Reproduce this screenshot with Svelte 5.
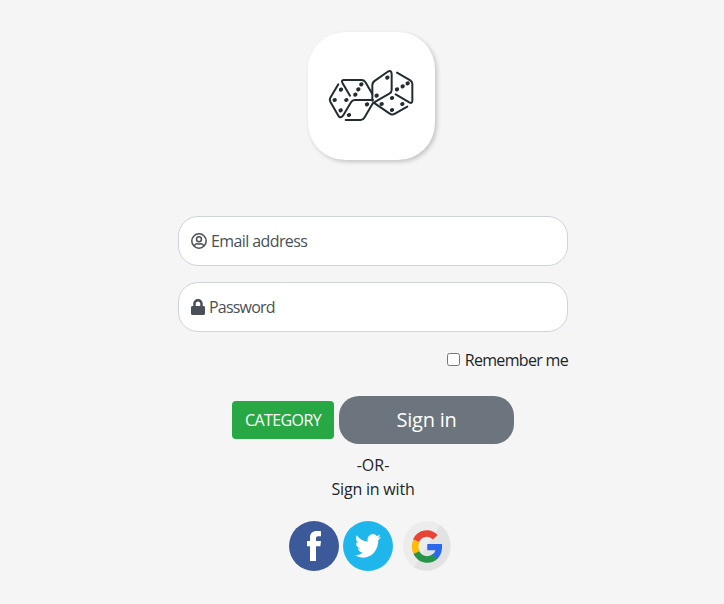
<script>
  let email = $state('');
  let password = $state('');
  let remember = $state(false);
  const pips = [
    [123, 197], [104, 228], [139, 228], [122, 259],
    [184, 181], [175, 196], [166, 212], [201, 241], [147, 273],
    [262, 161], [230, 215], [323, 178], [308, 187], [291, 196],
    [276, 222], [245, 240], [307, 240], [276, 258]
  ];
</script>

<main>
  <div class="logo">
    <svg viewBox="24 24 384 384" width="128" height="128" role="img" aria-label="Dice">
      <g fill="none" stroke="#232d31" stroke-width="6" stroke-linecap="round" stroke-linejoin="round">
        <path d="M115 181 L91 221 Q88 227 91 233 L115 275 Q121 285 129 275 L153 235 Q157 228 164 228 L219 228" />
        <path d="M150 215 L127 176 Q123 168 132 168 L185 168 Q192 168 196 174 L217 210" />
        <path d="M137 288 L182 288 Q189 288 193 281 L219 237" />
        <path d="M217 230 L217 184 Q217 175 225 170 L262 144 Q275 136 275 151 L275 198 Q275 205 268 209 L221 236 L268 268 Q276 275 285 269 L322 248" />
        <path d="M291 146 L331 169 Q337 173 337 180 L337 230 Q337 240 328 235 L287 211" />
      </g>
      {#each pips as [x, y]}
        <ellipse cx={x} cy={y} rx="6.6" ry="6" fill="#232d31" transform={`rotate(-22 ${x} ${y})`} />
      {/each}
    </svg>
  </div>

  <form onsubmit={(e) => e.preventDefault()}>
    <label class="field">
      <svg width="16" height="16" viewBox="0 0 16 16" fill="none" stroke="#495057" stroke-width="1.5">
        <circle cx="8" cy="8" r="7.2" />
        <circle cx="8" cy="6.2" r="2.45" />
        <path d="M3.2 13.1 C4 11 5 10.6 6.2 10.8 Q8 11.4 9.8 10.8 C11 10.6 12 11 12.8 13.1" />
      </svg>
      {#if !email}<span class="hint email">Email address</span>{/if}
      <input type="email" aria-label="Email address" bind:value={email} />
    </label>
    <label class="field">
      <svg width="14" height="16" viewBox="0 0 448 512" fill="#495057">
        <path d="M400 224h-24v-72C376 68 308 0 224 0S72 68 72 152v72H48c-27 0-48 21-48 48v192c0 27 21 48 48 48h352c27 0 48-21 48-48V272c0-27-21-48-48-48zm-104 0H152v-72c0-40 32-72 72-72s72 32 72 72z" />
      </svg>
      {#if !password}<span class="hint password">Password</span>{/if}
      <input type="password" aria-label="Password" bind:value={password} />
    </label>
    <label class="remember">
      <input type="checkbox" bind:checked={remember} />
      <span>Remember me</span>
    </label>
    <div class="actions">
      <button type="button" class="category"><span>CATEGORY</span></button>
      <button type="submit" class="signin"><span>Sign in</span></button>
    </div>
  </form>

  <p class="or">-OR-</p>
  <p class="with">Sign in with</p>

  <div class="social">
    <svg width="50" height="50" viewBox="0 0 50 50" role="img" aria-label="Facebook">
      <circle cx="25" cy="25" r="25" fill="#3c5a99" />
      <path d="M21 40V25.3H18V20H21V16.8C21 12.2 23.5 10 27.8 10H32V15.2H29.2C27.5 15.2 27 16 27 17.5V20H32L31.4 25.3H27V40Z" fill="#fff" />
    </svg>
    <svg width="50" height="50" viewBox="0 0 50 50" role="img" aria-label="Twitter">
      <circle cx="25" cy="25" r="25" fill="#1fb7eb" />
      <path transform="translate(12 10.4) scale(1.08 1.21)" d="M23.95 4.57a10 10 0 01-2.82.77 4.96 4.96 0 002.16-2.72 9.9 9.9 0 01-3.12 1.19 4.92 4.92 0 00-8.39 4.48A13.93 13.93 0 011.64 3.16a4.92 4.92 0 001.52 6.57 4.9 4.9 0 01-2.23-.61v.06a4.92 4.92 0 003.95 4.83 5 5 0 01-2.21.08 4.94 4.94 0 004.6 3.42A9.87 9.87 0 010 19.54a13.99 13.99 0 007.55 2.21c9.05 0 14-7.5 14-13.98l-.02-.63a9.94 9.94 0 002.42-2.57z" fill="#fff" />
    </svg>
    <svg class="google" width="48" height="50" viewBox="0 0 48 50" role="img" aria-label="Google">
      <ellipse cx="24" cy="25" rx="24" ry="25" fill="#ececec" />
      <path d="M37 4 A24 25 0 0 1 11 46 Z" fill="#e2e2e2" />
      <g fill="none" stroke-width="6.6">
        <path d="M12.9 19.8 A12.1 12.8 0 0 1 32.3 16.3" stroke="#ea4335" />
        <path d="M13.8 31.9 A12.1 12.8 0 0 1 13.6 19.7" stroke="#fbbc05" />
        <path d="M32.4 35.2 A12.1 12.8 0 0 1 13.5 31.6" stroke="#269447" />
      </g>
      <path d="M24.3 23 H38.9 C39.6 29.2 38 34.4 34.2 37.9 L29.2 33.8 Q31.7 32.1 32.4 29.3 H24.3 Z" fill="#2b68ed" />
    </svg>
  </div>
</main>

<style>
  :global(body) { background: #f5f5f5; }
  main {
    box-sizing: border-box;
    width: 390px;
    height: 604px;
    margin-left: 178px;
    padding-top: 32px;
    color: #212529;
    font: 16px/24px "Segoe UI", "Open Sans", "Noto Sans", sans-serif;
    text-align: center;
  }
  .logo {
    width: 127px;
    height: 128px;
    margin: 0 auto 56px 130px;
    border-radius: 37px;
    background: #fff;
    box-shadow: 2px 2px 4px #0003;
  }
  svg { display: block; flex: none; }
  .field {
    box-sizing: border-box;
    display: flex;
    align-items: center;
    height: 50px;
    margin-bottom: 16px;
    padding: 0 12px;
    border: 1px solid #ced4da;
    border-radius: 20px;
    background: #fff;
    color: #495057;
  }
  .field input {
    flex: 1;
    min-width: 0;
    border: 0;
    outline: 0;
    background: none;
    font: inherit;
  }
  .hint { margin-left: 4px; white-space: nowrap; }
  .email { letter-spacing: -0.6px; }
  .password { letter-spacing: -0.8px; }
  .remember {
    display: flex;
    align-items: center;
    justify-content: flex-end;
    height: 24px;
    letter-spacing: -0.68px;
  }
  .remember input { width: 13px; height: 13px; margin: 0 5px 1px 0; }
  .actions {
    display: flex;
    align-items: center;
    justify-content: center;
    gap: 5px;
    margin: 24px 0 9px;
  }
  button {
    display: flex;
    align-items: center;
    justify-content: center;
    padding: 0;
    border: 0;
    color: #fff;
    font: inherit;
    white-space: nowrap;
  }
  .category {
    width: 102px;
    height: 38px;
    border-radius: 4px;
    background: #28a745;
    letter-spacing: -0.6px;
  }
  .signin {
    width: 175px;
    height: 48px;
    border-radius: 20px;
    background: #6c757d;
    font-size: 20px;
    letter-spacing: -0.25px;
  }
  .signin span { padding-bottom: 0; }
  p { margin: 0; height: 24px; }
  .or { letter-spacing: 0; }
  .with { letter-spacing: -0.2px; }
  .social { display: flex; gap: 4px; margin: 20px 0 0 111px; }
  .google { margin-left: 6px; }
</style>
